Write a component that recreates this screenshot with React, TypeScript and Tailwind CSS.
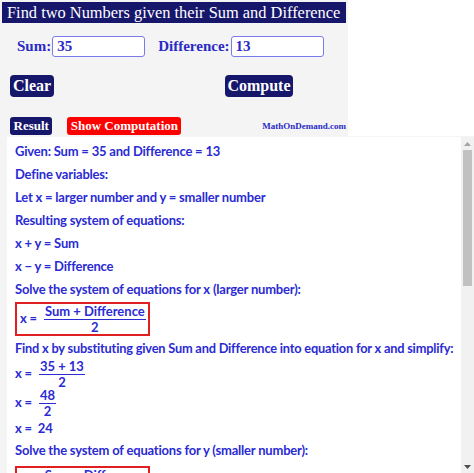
import React from 'react';

const serif = { fontFamily: '"Liberation Serif", "DejaVu Serif", serif' };
const sans = { fontFamily: 'Lato, "Liberation Sans", sans-serif' };

function Frac({ top, bottom }: { top: string; bottom: string }) {
  return (
    <span className="inline-flex flex-col items-center align-middle ml-[7px] leading-[15px] whitespace-nowrap tracking-normal">
      <span className="px-[1px] border-b-[1.5px] border-[#2b2bd4]">{top}</span>
      <span>{bottom}</span>
    </span>
  );
}

function Line({ children }: { children: React.ReactNode }) {
  return <div className="h-[23px] flex items-center whitespace-nowrap">{children}</div>;
}

export default function App() {
  return (
    <div className="w-[474px] h-[473px] overflow-hidden bg-white" style={sans}>
      {/* input panel */}
      <div className="w-[348px] h-[136px] bg-[#f4f4f4] pt-[2px] px-[2px]">
        <div
          className="h-[21px] bg-[#16166b] text-white text-[16.4px] leading-[21px] pl-[5px] whitespace-nowrap"
          style={serif}
        >
          Find two Numbers given their Sum and Difference
        </div>
        <div className="flex items-center mt-[12px] pl-[15px] text-[15px] font-bold text-[#2a2ac6]" style={serif}>
          <span>Sum:</span>
          <div className="ml-[1px] w-[93px] h-[21px] border border-[#7a7ae8] rounded-[3px] bg-white pl-[4px] leading-[19px] text-[15px]">
            35
          </div>
          <span className="ml-[13px]">Difference:</span>
          <div className="ml-[1px] w-[93px] h-[21px] border border-[#7a7ae8] rounded-[3px] bg-white pl-[4px] leading-[19px] text-[15px]">
            13
          </div>
        </div>
        <div className="flex mt-[17px] pl-[8px]" style={serif}>
          <button className="w-[44px] h-[22px] bg-[#16166b] rounded-[4px] text-white text-[16px] font-bold leading-[22px] whitespace-nowrap">
            Clear
          </button>
          <button className="ml-[171px] w-[68px] h-[22px] bg-[#16166b] rounded-[4px] text-white text-[16px] font-bold leading-[22px] whitespace-nowrap">
            Compute
          </button>
        </div>
        <div className="flex items-center mt-[20px] pl-[8px]" style={serif}>
          <button className="w-[44px] h-[18px] bg-[#16166b] rounded-[3px] text-white text-[13px] font-bold leading-[18px] whitespace-nowrap">
            Result
          </button>
          <button className="ml-[15px] w-[118px] h-[18px] bg-[#ff0000] rounded-[3px] text-white text-[13px] font-bold leading-[18px] whitespace-nowrap">
            Show Computation
          </button>
          <span className="ml-[81px] text-[9px] font-bold text-[#2a2ac6] mt-[2px] whitespace-nowrap">MathOnDemand.com</span>
        </div>
      </div>

      {/* computation panel */}
      <div className="h-[337px] bg-[#f4f4f4] pl-[7px] pt-[1px] flex">
        <div className="flex-1 bg-white overflow-hidden pl-[8px] pt-[3px] text-[13px] font-bold text-[#2b2bd4] tracking-[-0.2px]">
          <Line>Given: Sum = 35 and Difference = 13</Line>
          <Line>Define variables:</Line>
          <Line>Let x = larger number and y = smaller number</Line>
          <Line>Resulting system of equations:</Line>
          <Line>x + y = Sum</Line>
          <Line>x − y = Difference</Line>
          <Line>Solve the system of equations for x (larger number):</Line>
          <div className="mt-[1px] w-[135px] h-[34px] border-2 border-[#e02020] flex items-center pl-[3px] whitespace-nowrap">
            <span>x =</span>
            <Frac top="Sum + Difference" bottom="2" />
          </div>
          <div className="mt-[1px] h-[24px] flex items-center whitespace-nowrap text-[12.8px] tracking-[-0.2px]">
            Find x by substituting given Sum and Difference into equation for x and simplify:
          </div>
          <div className="h-[26px] flex items-center whitespace-nowrap">
            <span>x =</span>
            <Frac top="35 + 13" bottom="2" />
          </div>
          <div className="h-[32px] flex items-center whitespace-nowrap">
            <span>x =</span>
            <Frac top="48" bottom="2" />
          </div>
          <div className="h-[20px] flex items-center whitespace-nowrap">x =&nbsp; 24</div>
          <div className="h-[24px] flex items-center whitespace-nowrap">
            Solve the system of equations for y (smaller number):
          </div>
          <div className="mt-[3px] w-[135px] h-[34px] border-2 border-[#e02020] flex items-center pl-[3px] whitespace-nowrap">
            <span>y =</span>
            <Frac top="Sum − Difference" bottom="2" />
          </div>
        </div>
        {/* scrollbar */}
        <div className="w-[13px] bg-[#f1f1f1] flex flex-col items-center">
          <div className="h-[13px] flex items-center justify-center">
            <svg width="7" height="4" viewBox="0 0 7 4"><path d="M0 4 L3.5 0 L7 4 Z" fill="#a3a3a3" /></svg>
          </div>
          <div className="w-[9px] h-[136px] bg-[#c1c1c1]" />
          <div className="flex-1" />
          <div className="h-[13px] flex items-center justify-center">
            <svg width="7" height="4" viewBox="0 0 7 4"><path d="M0 0 L3.5 4 L7 0 Z" fill="#505050" /></svg>
          </div>
        </div>
      </div>
    </div>
  );
}
